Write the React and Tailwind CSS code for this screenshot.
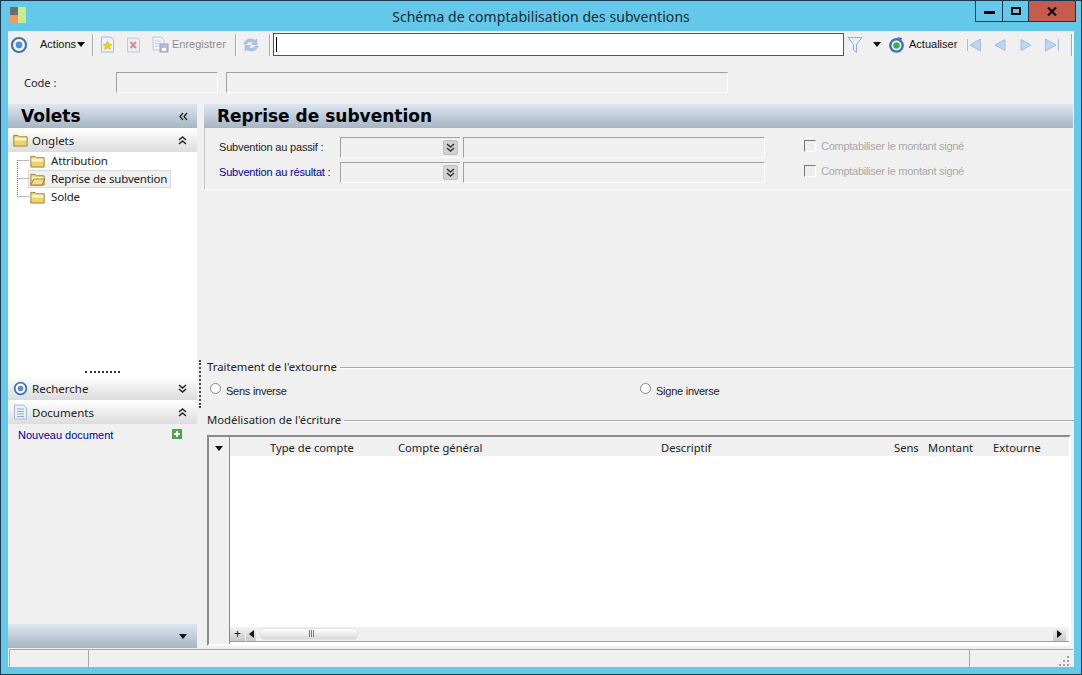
const sans = 'font-["Noto_Sans",sans-serif]'
const thin = 'font-["Liberation_Sans",sans-serif] text-[11px]'

function Target({ size = 18, inner = '#4f8fd6' }) {
  return (
    <svg width={size} height={size} viewBox="0 0 18 18" className="shrink-0">
      <circle cx="9" cy="9" r="7" fill="#fff" stroke="#3f74b8" strokeWidth="2.2" />
      <circle cx="9" cy="9" r="3.4" fill={inner} />
    </svg>
  )
}

function Folder({ open }) {
  return (
    <svg width="15" height="13" viewBox="0 0 18 14" preserveAspectRatio="none" className="shrink-0">
      <path d="M1 1.500h5l1.500 1.500H17v10H1z" fill="#f3d266" stroke="#8f7638" />
      <path d="M2 4h14v3H2z" fill="#fff6cc" />
      {open && <path d="M1 13 4.500 6.500H17.500L14.500 13z" fill="#f7dc85" stroke="#8f7638" />}
    </svg>
  )
}

function Chevrons({ up, color = '#222' }) {
  return (
    <svg width="9" height="9" viewBox="0 0 9 9" className="shrink-0">
      <path d={up ? 'M1 4 4.500 1 8 4M1 8 4.500 5 8 8' : 'M1 1 4.500 4 8 1M1 5 4.500 8 8 5'} fill="none" stroke={color} strokeWidth="1.500" />
    </svg>
  )
}

function Caret() {
  return (
    <svg width="8" height="5" viewBox="0 0 8 5" className="shrink-0">
      <path d="M0 0h8L4 5z" fill="#111" />
    </svg>
  )
}

function Separator() {
  return <div className="h-[22px] w-px bg-[#a8a8a8] border-r border-white box-content" />
}

function NavArrow({ d }) {
  return (
    <svg width="16" height="14" viewBox="0 0 16 14" className="shrink-0">
      <path d={d} fill="#bcd6f2" stroke="#9dbfe4" />
    </svg>
  )
}

function Toolbar() {
  return (
    <div className={`h-[27px] flex items-center text-[#111] ${thin}`}>
      <div className="ml-[2px]"><Target /></div>
      <span className="ml-[12px] w-[35px]">Actions</span>
      <div className="ml-[2px]"><Caret /></div>
      <div className="ml-[7px]"><Separator /></div>
      <svg width="15" height="17" viewBox="0 0 15 17" className="ml-[6px] shrink-0">
        <path d="M1.500 1h9l3 3v12h-12z" fill="#eef3fa" stroke="#a9b8cc" />
        <path d="M7.500 5 9 8l3 .4-2.200 2 .6 3-2.900-1.500-2.900 1.500.6-3-2.200-2 3-.4z" fill="#f2d21f" stroke="#c9a916" strokeWidth=".5" />
      </svg>
      <svg width="15" height="16" viewBox="0 0 15 16" className="ml-[11px] shrink-0">
        <path d="M1.500 1h10l2 2v12h-12z" fill="#eceef3" stroke="#c3c8d2" />
        <path d="M4.500 5 10 11M10 5l-5.500 6" stroke="#dc8b8b" strokeWidth="2" />
      </svg>
      <svg width="17" height="17" viewBox="0 0 17 17" className="ml-[11px] shrink-0">
        <path d="M1 1h8l3 3v10H1z" fill="#eef2f8" stroke="#bcc6d6" />
        <path d="M3 5h6M3 7.500h6M3 10h6" stroke="#c6d0de" />
        <rect x="8" y="8" width="8" height="8" fill="#b4bfd8" stroke="#98a3c0" />
        <rect x="10" y="12" width="4" height="3" fill="#fff" />
      </svg>
      <span className="ml-[3px] w-[54px] text-[#8d8d8d]">Enregistrer</span>
      <div className="ml-[9px]"><Separator /></div>
      <svg width="18" height="18" viewBox="0 0 18 18" className="ml-[5px] shrink-0">
        <path d="M2 8C3 3.500 8.500 1.500 13 4.500L15 3v5.500H9.500l2-1.800C9 5 6 5.500 4.500 8z" fill="#a9c4e4" stroke="#8cabd0" strokeWidth=".5" />
        <path d="M16 10c-1 4.500-6.500 6.500-11 3.500L3 15V9.500h5.500l-2 1.800C9 13 12 12.500 13.500 10z" fill="#a9c4e4" stroke="#8cabd0" strokeWidth=".5" />
      </svg>
      <div className="ml-[9px]"><Separator /></div>
      <div className="ml-[2px] w-[571px] h-[23px] bg-white border border-[#2f5d8a] flex items-center pl-[2px]">
        <div className="w-px h-[15px] bg-black" />
      </div>
      <svg width="16" height="18" viewBox="0 0 16 18" className="ml-[3px] shrink-0">
        <path d="M1 1.500h14L9.500 8.500v8l-3-2.500V8.500z" fill="#e6f0fa" stroke="#8fb0d2" />
      </svg>
      <div className="ml-[10px]"><Caret /></div>
      <svg width="17" height="18" viewBox="0 0 18 18" className="ml-[7px] shrink-0">
        <circle cx="9" cy="9.500" r="6.500" fill="#fff" stroke="#3f74b8" strokeWidth="2.600" />
        <circle cx="9" cy="9.500" r="3.500" fill="#35b34a" />
        <path d="M10 .5l5 1-2 4z" fill="#3f74b8" />
      </svg>
      <span className="ml-[4px] w-[47px]">Actualiser</span>
      <div className="ml-[10px] flex items-center gap-[10px]">
        <NavArrow d="M1.500 1v12M14.500 1v12L4 7z" />
        <NavArrow d="M13 1.500v11L3 7z" />
        <NavArrow d="M3 1.500v11L13 7z" />
        <NavArrow d="M1.500 1v12L12 7zM14.500 1v12" />
      </div>
      <div className="ml-[11px]"><Separator /></div>
    </div>
  )
}

function Sunken({ className = '' }) {
  return <div className={`h-[21px] border-t border-l border-t-[#a0a0a0] border-l-[#a0a0a0] border-r border-b border-r-white border-b-white ${className}`} />
}

function Gradient({ className = '', children }) {
  return <div className={`bg-gradient-to-b from-[#dde7f1] to-[#a7b5c3] ${className}`}>{children}</div>
}

function SectionHeader({ icon, label, up }) {
  return (
    <div className="h-[24px] flex items-center justify-between pl-[5px] pr-[10px] bg-gradient-to-b from-white to-[#dcdcdc] text-[11.5px] text-[#222]">
      <div className="flex items-center gap-[4px]">
        {icon}
        <span className="pt-[1px]">{label}</span>
      </div>
      <Chevrons up={up} />
    </div>
  )
}

function Tree() {
  const items = ['Attribution', 'Reprise de subvention', 'Solde']
  return (
    <div className="relative h-[217px] bg-white text-[11.5px] text-[#222]">
      <svg width="12" height="40" viewBox="0 0 12 40" className="absolute left-[9px] top-[8px]">
        <path d="M.5 0v36M.5 .5H12M.5 18.500H12M.5 36.500H12" stroke="#777" strokeDasharray="1 1" fill="none" />
      </svg>
      {items.map((item, i) => (
        <div key={item} className="h-[18px] flex pl-[20px]">
          <div className={`flex items-center pl-[1px] pr-[3px] border ${i === 1 ? 'bg-[#f0f0f0] border-[#dadada]' : 'border-transparent'}`}>
            <Folder open={i === 1} />
            <span className="ml-[6px] tracking-[-0.18px]">{item}</span>
          </div>
        </div>
      ))}
    </div>
  )
}

function Sidebar() {
  return (
    <div className="w-[189px] flex flex-col shrink-0">
      <Gradient className="h-[24px] flex items-center justify-between pl-[13px] pr-[9px]">
        <span className="pt-[1px] font-['DejaVu_Sans',sans-serif] font-bold text-[17px] text-black">Volets</span>
        <svg width="9" height="9" viewBox="0 0 9 9">
          <path d="M4 1 1 4.500 4 8M8 1 5 4.500 8 8" fill="none" stroke="#222" strokeWidth="1.300" />
        </svg>
      </Gradient>
      <SectionHeader icon={<Folder />} label="Onglets" up />
      <Tree />
      <div className="h-[7px] flex justify-center pt-[2px] bg-white">
        <div className="w-[35px] h-[2px] border-t-2 border-dotted border-[#333]" />
      </div>
      <SectionHeader icon={<Target size={15} />} label="Recherche" />
      <SectionHeader
        icon={
          <svg width="15" height="16" viewBox="0 0 15 16" className="shrink-0">
            <path d="M1.500 1h9l3 3v11h-12z" fill="#e9f0fb" stroke="#a5b9d6" />
            <path d="M4 5h7M4 7.500h7M4 10h7M4 12.500h7" stroke="#8faad0" />
          </svg>
        }
        label="Documents"
        up
      />
      <div className={`flex-1 flex items-start justify-between pl-[10px] pr-[15px] pt-[3px] text-[#0000a8] ${thin}`}>
        <span>Nouveau document</span>
        <svg width="10" height="10" viewBox="0 0 10 10" className="mt-[2px]">
          <rect width="10" height="10" fill="#4aa84a" />
          <path d="M5 2v6M2 5h6" stroke="#fff" strokeWidth="2" />
        </svg>
      </div>
      <Gradient className="h-[24px] flex items-center justify-end pr-[10px]">
        <Caret />
      </Gradient>
    </div>
  )
}

function CheckLabel() {
  return (
    <div className={`flex items-center gap-[5px] tracking-[-0.27px] text-[#a8a8a8] ${thin}`}>
      <div className="w-[12px] h-[12px] border border-t-[#777] border-l-[#777] border-r-white border-b-white bg-[#eee]" />
      <span>Comptabiliser le montant signé</span>
    </div>
  )
}

function FieldRow({ label, blue }) {
  return (
    <div className="h-[25px] flex items-center">
      <span className={`w-[135px] shrink-0 pl-[14px] tracking-[-0.17px] ${thin} ${blue ? 'text-[#0000a0]' : 'text-[#222]'}`}>{label}</span>
      <div className="w-[120px] h-[21px] border-t border-l border-t-[#a0a0a0] border-l-[#a0a0a0] border-b border-b-white flex items-center justify-end pr-[2px]">
        <div className="w-[15px] h-[15px] rounded-[2px] bg-[#d2d2d2] border border-[#bdbdbd] flex items-center justify-center">
          <Chevrons color="#333" />
        </div>
      </div>
      <Sunken className="ml-[3px] w-[302px]" />
      <div className="ml-[39px] -mt-[3px]"><CheckLabel /></div>
    </div>
  )
}

function GroupTitle({ children }) {
  return (
    <div className="h-[14px] flex items-center gap-[3px] pl-[3px] text-[11.3px] text-[#222]">
      <span className="shrink-0 -mt-[2px]">{children}</span>
      <div className="flex-1 h-[2px] border-t border-t-[#a8a8a8] border-b border-b-white" />
    </div>
  )
}

function Radio({ label, className = '' }) {
  return (
    <div className={`flex items-center gap-[5px] tracking-[-0.25px] text-[#222] ${thin} ${className}`}>
      <div className="w-[11px] h-[11px] mb-[6px] rounded-full bg-white border border-[#888]" />
      <span>{label}</span>
    </div>
  )
}

function Grid() {
  const cols = [
    ['w-[40px]', ''],
    ['w-[128px]', 'Type de compte'],
    ['w-[263px]', 'Compte général'],
    ['w-[233px]', 'Descriptif'],
    ['w-[34px]', 'Sens'],
    ['w-[65px]', 'Montant'],
    ['', 'Extourne'],
  ]
  return (
    <div className="ml-[3px] mr-[3px] mt-[7px] h-[211px] border-2 border-t-[#8a8a8a] border-l-[#8a8a8a] border-r-white border-b-white bg-white flex">
      <div className="w-[21px] shrink-0 bg-[#f0f0f0] border-r border-[#888] flex justify-center pt-[9px]">
        <Caret />
      </div>
      <div className="flex-1 flex flex-col min-w-0">
        <div className="h-[19px] pt-[4px] bg-[#f0f0f0] flex items-center text-[11.2px] text-[#222]">
          {cols.map(([w, label], i) => <div key={i} className={`${w} shrink-0`}>{label}</div>)}
        </div>
        <div className="flex-1" />
        <div className="h-[15px] mb-[2px] pb-px bg-[#f0f0f0] border-b border-b-[#a0a0a0] flex items-center text-[#111]">
          <div className="w-[15px] h-[14px] bg-gradient-to-b from-[#f4f4f4] to-[#c8c8c8] flex items-center justify-center text-[12px] leading-none">+</div>
          <div className="ml-[1px] w-[10px] h-[14px] bg-gradient-to-b from-[#f4f4f4] to-[#c8c8c8] flex items-center justify-center">
            <svg width="5" height="8" viewBox="0 0 5 8"><path d="M5 0v8L0 4z" fill="#111" /></svg>
          </div>
          <div className="ml-[3px] w-[100px] h-[12px] rounded-full bg-gradient-to-b from-white to-[#d8d8d8] border border-[#e2e2e2] flex items-center justify-center gap-[1px] pl-[5px]">
            <div className="w-px h-[7px] bg-[#777]" />
            <div className="w-px h-[7px] bg-[#777]" />
            <div className="w-px h-[7px] bg-[#777]" />
          </div>
          <div className="flex-1" />
          <div className="w-[13px] h-[14px] mr-[3px] bg-gradient-to-b from-[#f4f4f4] to-[#c8c8c8] flex items-center justify-center">
            <svg width="5" height="8" viewBox="0 0 5 8"><path d="M0 0v8l5-4z" fill="#111" /></svg>
          </div>
        </div>
      </div>
    </div>
  )
}

function MainPane() {
  return (
    <div className="flex-1 flex flex-col min-w-0">
      <Gradient className="h-[24px] flex items-center pl-[13px] mr-[1px]">
        <span className="pt-[2px] font-['DejaVu_Sans',sans-serif] font-bold text-[17px] text-black">Reprise de subvention</span>
      </Gradient>
      <div className="h-[62px] pt-[7px] border-l border-l-[#c4c4c4] border-b border-b-white">
        <FieldRow label="Subvention au passif :" />
        <FieldRow label="Subvention au résultat :" blue />
      </div>
      <div className="h-[171px]" />
      <GroupTitle>Traitement de l'extourne</GroupTitle>
      <div className="h-[26px] pt-[8px] flex items-start pl-[6px]">
        <Radio label="Sens inverse" className="w-[430px]" />
        <Radio label="Signe inverse" />
      </div>
      <div className="mt-[13px]">
        <GroupTitle>Modélisation de l'écriture</GroupTitle>
      </div>
      <Grid />
    </div>
  )
}

function StatusBar() {
  return (
    <div className="h-[18px] mx-[1px] mt-[1px] border-t border-t-[#a8a8a8] flex">
      <div className="w-[80px] border-l border-r border-[#a8a8a8]" />
      <div className="flex-1 border-r border-[#a8a8a8]" />
      <div className="w-[103px] flex justify-end items-end pr-[4px] pb-[1px]">
        <svg width="11" height="11" viewBox="0 0 11 11">
          <path d="M9 1h2v2H9zM5 5h2v2H5zM9 5h2v2H9zM1 9h2v2H1zM5 9h2v2H5zM9 9h2v2H9z" fill="#a0a0a0" />
        </svg>
      </div>
    </div>
  )
}

export default function App() {
  return (
    <div className={`w-[1082px] h-[675px] bg-[#63c8ea] border border-[#17384c] flex flex-col overflow-hidden ${sans}`}>
      <div className="h-[30px] shrink-0 flex items-start">
        <svg width="16" height="16" viewBox="0 0 16 16" className="ml-[9px] mt-[6px]">
          <rect width="8" height="8" fill="#6e6e6e" />
          <rect y="8" width="8" height="8" fill="#f09a5e" />
          <rect x="8" width="8" height="16" fill="#c8ec8c" />
        </svg>
        <div className="flex-1 pl-[81px] text-center text-[14px] leading-[31px] tracking-[0.05px] text-[#1a2a33]">
          Schéma de comptabilisation des subventions
        </div>
        <div className="flex h-[21px] border border-t-0 border-[#17384c] mr-[5px]">
          <div className="w-[27px] border-r border-[#17384c] flex items-center justify-center">
            <div className="w-[11px] h-[3px] mt-[3px] bg-black" />
          </div>
          <div className="w-[26px] border-r border-[#17384c] flex items-center justify-center">
            <div className="w-[10px] h-[8px] border-2 border-black" />
          </div>
          <div className="w-[46px] bg-[#c75b4e] flex items-center justify-center">
            <svg width="10" height="9" viewBox="0 0 10 9"><path d="M1 .5 9 8.500M9 .5 1 8.500" stroke="#111" strokeWidth="2.200" /></svg>
          </div>
        </div>
      </div>
      <div className="mx-[7px] mb-[7px] flex-1 min-h-0 bg-[#f0f0f0] flex flex-col">
        <Toolbar />
        <div className="h-[46px] flex items-start pt-[14px] text-[11px] text-[#222]">
          <span className="w-[108px] pl-[16px] leading-[21px]">Code :</span>
          <Sunken className="w-[102px]" />
          <Sunken className="ml-[8px] w-[502px]" />
        </div>
        <div className="flex-1 min-h-0 flex">
          <Sidebar />
          <div className="w-[7px] shrink-0 pt-[256px] pl-[2px]">
            <div className="h-[48px] border-l-2 border-dotted border-[#444]" />
          </div>
          <MainPane />
        </div>
        <StatusBar />
      </div>
    </div>
  )
}
